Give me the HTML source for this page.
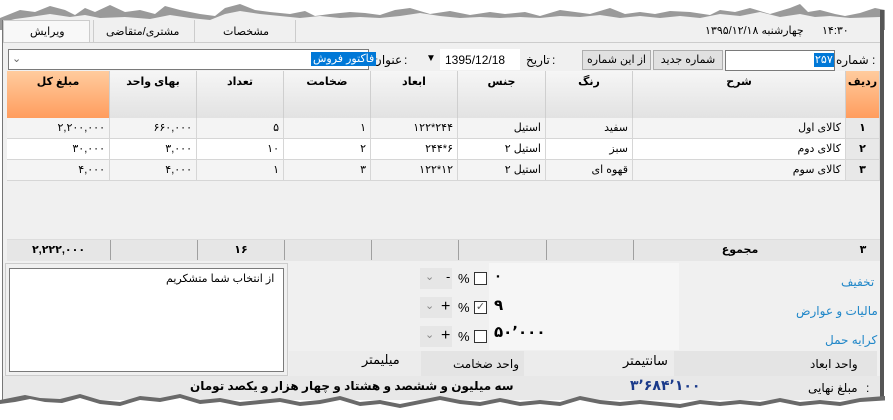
<!DOCTYPE html>
<html><head><meta charset="utf-8">
<style>
*{margin:0;padding:0;box-sizing:border-box}
body{width:893px;height:420px;overflow:hidden;background:#fff;position:relative;font-family:"Liberation Sans","DejaVu Sans",sans-serif;font-size:11px;color:#000}
.a{position:absolute}
.t{position:absolute;white-space:nowrap;direction:rtl;line-height:14px}
.hd{position:absolute;top:71px;height:47px;background:linear-gradient(#f6f6f6,#e2e2e2);border-right:1px solid #cfcfcf;font-weight:bold;text-align:center;padding-top:4px;direction:rtl}
.or{background:linear-gradient(#ffcc9e,#ff9d5e)}
.c{position:absolute;height:21px;border-right:1px solid #d6d6d6;border-bottom:1px solid #d6d6d6;direction:rtl;line-height:20px;padding:0 4px;white-space:nowrap}
.n{direction:ltr;text-align:right}
.f{position:absolute;top:240px;height:20px;border-left:1px solid #a0a0a0;font-weight:bold;text-align:center;line-height:20px;direction:rtl}
.btn{position:absolute;top:50px;height:20px;background:#e1e1e1;border:1px solid #adadad;text-align:center;line-height:18px;direction:rtl}
.lb{color:#1f86c8;font-size:12px}
.cb{position:absolute;width:13px;height:13px;border:1px solid #333;background:#fff}
.dd{position:absolute;width:32px;height:21px;background:#e6e6e6}
</style></head><body>
<svg class="a" style="left:0;top:0" width="893" height="30">
<polygon fill="#9a9a9a" points="0,30 0,18 10,14 20,10 35,12 50,6 65,10 75,15 85,8 95,12 110,5 125,12 140,10 155,14 165,6 180,10 200,14 215,16 225,8 240,4 255,10 270,12 290,14 305,11 315,16 330,14 350,12 365,13 380,15 395,10 410,8 430,14 450,11 470,15 490,12 505,14 525,12 540,16 560,10 575,12 590,14 610,8 625,14 640,12 655,14 670,11 690,12 710,15 720,10 735,12 750,8 770,14 790,8 800,4 808,12 820,10 835,14 845,16 860,13 875,8 885,10 885,30"/>
<polygon fill="#f0f0f0" points="3,30 3,22 15,19 30,17 50,14 70,17 85,15 100,18 125,17 150,19 170,15 190,18 210,20 225,14 240,11 260,14 280,16 300,18 320,16 340,18 360,17 380,18 400,16 420,13 440,16 460,18 480,17 500,18 520,17 540,18 560,16 580,17 600,15 620,18 640,16 660,18 680,16 700,18 720,14 740,16 760,12 780,17 800,14 815,17 830,16 850,18 880,17 880,30"/>
</svg>
<div class="a" style="left:3px;top:30px;width:877px;height:370px;background:#f0f0f0"></div>
<div class="a" style="left:880px;top:10px;width:4px;height:392px;background:#555"></div>
<div class="a" style="left:2px;top:20px;width:1px;height:380px;background:#777"></div>
<!-- tabs -->
<div class="a" style="left:3px;top:20px;width:87px;height:22px;background:#f8f8f8;border:1px solid #ccc;border-bottom:none"></div>
<div class="t" style="left:30px;top:25px">ویرایش</div>
<div class="a" style="left:93px;top:20px;width:102px;height:22px;border-right:1px solid #ccc;border-left:1px solid #ccc"></div>
<div class="t" style="left:106px;top:25px">مشتری/متقاضی</div>
<div class="a" style="left:295px;top:20px;width:1px;height:22px;background:#ccc"></div>
<div class="t" style="left:223px;top:25px">مشخصات</div>
<div class="a" style="left:3px;top:42px;width:877px;height:1px;background:#ccc"></div>
<div class="t" style="left:705px;top:24px">چهارشنبه ۱۳۹۵/۱۲/۱۸</div>
<div class="t" style="left:822px;top:24px">۱۴:۳۰</div>
<!-- form row -->
<div class="t" style="left:836px;top:53px;font-size:12px">شماره</div><div class="a" style="left:872px;top:53px;font-size:12px">:</div>
<div class="a" style="left:725px;top:50px;width:110px;height:21px;background:#fff;border:1px solid #7a7a7a"></div>
<div class="t" style="left:814px;top:53px;background:#0078d7;color:#fff;padding:0 1px">۲۵۷</div>
<div class="btn" style="left:653px;width:70px">شماره جدید</div>
<div class="btn" style="left:582px;width:69px">از این شماره</div>
<div class="t" style="left:526px;top:53px;font-size:12px">تاریخ</div><div class="a" style="left:552px;top:53px;font-size:12px">:</div>
<div class="a" style="left:440px;top:49px;width:80px;height:21px;background:#fff"></div>
<div class="a" style="left:445px;top:53px;font-size:12px">1395/12/18</div>
<div class="a" style="left:426px;top:53px;font-size:10px">&#9660;</div>
<div class="t" style="left:373px;top:53px;font-size:12px">عنوان</div><div class="a" style="left:404px;top:53px;font-size:12px">:</div>
<div class="a" style="left:8px;top:49px;width:361px;height:21px;background:#fff;border:1px solid #7a7a7a"></div>
<div class="t" style="left:311px;top:52px;background:#0078d7;color:#fff;padding:0 2px">فاکتور فروش</div>
<div class="a" style="left:12px;top:52px;color:#666">&#8964;</div>
<!-- grid header -->
<div class="a" style="left:7px;top:71px;width:873px;height:167px;background:#f0f0f0"></div>
<div class="hd or" style="left:846px;width:34px">ردیف</div>
<div class="hd" style="left:633px;width:213px">شرح</div>
<div class="hd" style="left:546px;width:87px">رنگ</div>
<div class="hd" style="left:458px;width:88px">جنس</div>
<div class="hd" style="left:371px;width:87px">ابعاد</div>
<div class="hd" style="left:284px;width:87px">ضخامت</div>
<div class="hd" style="left:197px;width:87px">تعداد</div>
<div class="hd" style="left:110px;width:87px">بهای واحد</div>
<div class="hd or" style="left:7px;width:103px">مبلغ کل</div>
<!-- rows -->
<div class="c" style="left:846px;top:118px;width:34px;background:#e8e8e8;font-weight:bold;text-align:center">۱</div>
<div class="c" style="left:633px;top:118px;width:213px;background:#f4f4f4">کالای اول</div>
<div class="c" style="left:546px;top:118px;width:87px;background:#f4f4f4">سفید</div>
<div class="c" style="left:458px;top:118px;width:88px;background:#f4f4f4">استیل</div>
<div class="c n" style="left:371px;top:118px;width:87px;background:#f4f4f4">۱۲۲*۲۴۴</div>
<div class="c" style="left:284px;top:118px;width:87px;background:#f4f4f4">۱</div>
<div class="c" style="left:197px;top:118px;width:87px;background:#f4f4f4">۵</div>
<div class="c n" style="left:110px;top:118px;width:87px;background:#f4f4f4">۶۶۰,۰۰۰</div>
<div class="c n" style="left:7px;top:118px;width:103px;background:#f4f4f4">۲,۲۰۰,۰۰۰</div>

<div class="c" style="left:846px;top:139px;width:34px;background:#e8e8e8;font-weight:bold;text-align:center">۲</div>
<div class="c" style="left:633px;top:139px;width:213px;background:#fff">کالای دوم</div>
<div class="c" style="left:546px;top:139px;width:87px;background:#fff">سبز</div>
<div class="c" style="left:458px;top:139px;width:88px;background:#fff">استیل ۲</div>
<div class="c n" style="left:371px;top:139px;width:87px;background:#fff">۲۴۴*۶</div>
<div class="c" style="left:284px;top:139px;width:87px;background:#fff">۲</div>
<div class="c" style="left:197px;top:139px;width:87px;background:#fff">۱۰</div>
<div class="c n" style="left:110px;top:139px;width:87px;background:#fff">۳,۰۰۰</div>
<div class="c n" style="left:7px;top:139px;width:103px;background:#fff">۳۰,۰۰۰</div>

<div class="c" style="left:846px;top:160px;width:34px;background:#e8e8e8;font-weight:bold;text-align:center">۳</div>
<div class="c" style="left:633px;top:160px;width:213px;background:#f4f4f4">کالای سوم</div>
<div class="c" style="left:546px;top:160px;width:87px;background:#f4f4f4">قهوه ای</div>
<div class="c" style="left:458px;top:160px;width:88px;background:#f4f4f4">استیل ۲</div>
<div class="c n" style="left:371px;top:160px;width:87px;background:#f4f4f4">۱۲۲*۱۲</div>
<div class="c" style="left:284px;top:160px;width:87px;background:#f4f4f4">۳</div>
<div class="c" style="left:197px;top:160px;width:87px;background:#f4f4f4">۱</div>
<div class="c n" style="left:110px;top:160px;width:87px;background:#f4f4f4">۴,۰۰۰</div>
<div class="c n" style="left:7px;top:160px;width:103px;background:#f4f4f4">۴,۰۰۰</div>
<!-- footer -->
<div class="a" style="left:7px;top:239px;width:873px;height:22px;background:#e6e6e6;border-top:1px solid #ddd"></div>
<div class="f" style="left:846px;width:34px;border:none">۳</div>
<div class="f" style="left:633px;width:213px">مجموع</div>
<div class="f" style="left:546px;width:87px"></div>
<div class="f" style="left:458px;width:88px"></div>
<div class="f" style="left:371px;width:87px"></div>
<div class="f" style="left:284px;width:87px"></div>
<div class="f" style="left:197px;width:87px">۱۶</div>
<div class="f" style="left:110px;width:87px"></div>
<div class="f" style="left:7px;width:103px;border:none">۲,۲۲۲,۰۰۰</div>
<!-- bottom panel -->
<div class="a" style="left:5px;top:263px;width:283px;height:113px;background:#f0f0f0;border:1px solid #ccc"></div>
<div class="a" style="left:9px;top:268px;width:275px;height:104px;background:#fff;border:1px solid #7a7a7a"></div>
<div class="t" style="left:166px;top:272px">از انتخاب شما متشکریم</div>
<div class="a" style="left:289px;top:263px;width:588px;height:87px;background:#f0f0f0"></div>
<div class="a" style="left:489px;top:263px;width:190px;height:87px;background:#f6f6f6"></div>
<div class="t lb" style="left:841px;top:275px">تخفیف</div>
<div class="t lb" style="left:796px;top:304px">مالیات و عوارض</div>
<div class="t lb" style="left:825px;top:333px">کرایه حمل</div>
<!-- controls -->
<div class="dd" style="left:420px;top:268px"></div><div class="a" style="left:425px;top:270px;color:#888">&#8964;</div>
<div class="a" style="left:446px;top:269px;font-size:13px">-</div>
<div class="a" style="left:458px;top:271px;font-size:13px">%</div>
<div class="cb" style="left:474px;top:272px"></div>
<div class="a" style="left:494px;top:268px;font-weight:bold;font-size:13px">۰</div>

<div class="dd" style="left:420px;top:297px"></div><div class="a" style="left:425px;top:299px;color:#888">&#8964;</div>
<div class="a" style="left:441px;top:298px;font-size:16px">+</div>
<div class="a" style="left:458px;top:300px;font-size:13px">%</div>
<div class="cb" style="left:474px;top:301px;font-size:11px;line-height:11px;color:#555;text-align:center">&#10003;</div>
<div class="a" style="left:494px;top:296px;font-weight:bold;font-size:15px">۹</div>

<div class="dd" style="left:420px;top:326px"></div><div class="a" style="left:425px;top:328px;color:#888">&#8964;</div>
<div class="a" style="left:441px;top:327px;font-size:16px">+</div>
<div class="a" style="left:458px;top:329px;font-size:13px">%</div>
<div class="cb" style="left:474px;top:330px"></div>
<div class="t" style="left:494px;top:326px;font-weight:bold;font-size:15px;direction:ltr">۵۰٬۰۰۰</div>
<!-- units -->
<div class="a" style="left:289px;top:351px;width:588px;height:25px;background:#e4e4e4"></div>
<div class="a" style="left:524px;top:351px;width:150px;height:25px;background:#ececec"></div>
<div class="a" style="left:289px;top:351px;width:132px;height:25px;background:#ececec"></div>
<div class="t" style="left:810px;top:357px;font-size:12px">واحد ابعاد</div>
<div class="t" style="left:623px;top:354px;font-size:13px">سانتیمتر</div>
<div class="t" style="left:453px;top:357px;font-size:12px">واحد ضخامت</div>
<div class="t" style="left:362px;top:353px;font-size:13px">میلیمتر</div>
<!-- final -->
<div class="a" style="left:3px;top:376px;width:877px;height:24px;background:#e8e8e8"></div>
<div class="t" style="left:808px;top:381px;font-size:12px">مبلغ نهایی</div><div class="a" style="left:866px;top:381px;font-size:12px">:</div>
<div class="t" style="left:630px;top:378px;font-size:14px;color:#1a3a8a;font-weight:bold;direction:ltr">۳٬۶۸۴٬۱۰۰</div>
<div class="t" style="left:190px;top:379px;font-weight:bold;font-size:12px">سه میلیون و ششصد و هشتاد و چهار هزار و یکصد تومان</div>
<!-- torn bottom -->
<svg class="a" style="left:0;top:390px" width="893" height="30">
<polygon fill="#6a6a6a" points="0,10 10,8 25,5 40,8 60,9 80,4 100,10 120,12 140,6 160,8 180,4 200,10 220,8 240,12 260,10 280,8 300,12 320,10 340,6 360,12 380,10 400,14 420,10 440,6 460,10 480,12 500,8 520,12 540,10 560,12 580,6 600,10 620,12 640,10 660,12 680,14 700,10 720,12 740,10 760,12 780,8 800,12 820,10 840,12 860,8 885,6 885,20 860,18 840,20 820,22 800,20 780,22 760,20 740,24 720,22 700,20 680,24 660,22 640,20 620,24 600,22 580,18 560,20 540,22 520,20 500,22 480,24 460,20 440,16 420,20 400,24 380,22 360,22 340,18 320,20 300,22 280,20 260,22 240,24 220,20 200,22 180,16 160,20 140,18 120,22 100,20 80,16 60,20 40,18 20,18 0,20"/>
<polygon fill="#fff" points="0,14 15,12 30,9 45,12 62,13 80,8 100,14 120,16 140,10 160,12 180,8 200,14 220,12 240,16 260,14 280,12 300,16 320,14 340,10 360,16 380,14 400,18 420,14 440,10 460,14 480,16 500,12 520,16 540,14 560,16 580,10 600,14 620,16 640,14 660,16 680,18 700,14 720,16 740,14 760,16 780,12 800,16 820,14 840,16 860,12 893,10 893,30 0,30"/>
</svg>
</body></html>
